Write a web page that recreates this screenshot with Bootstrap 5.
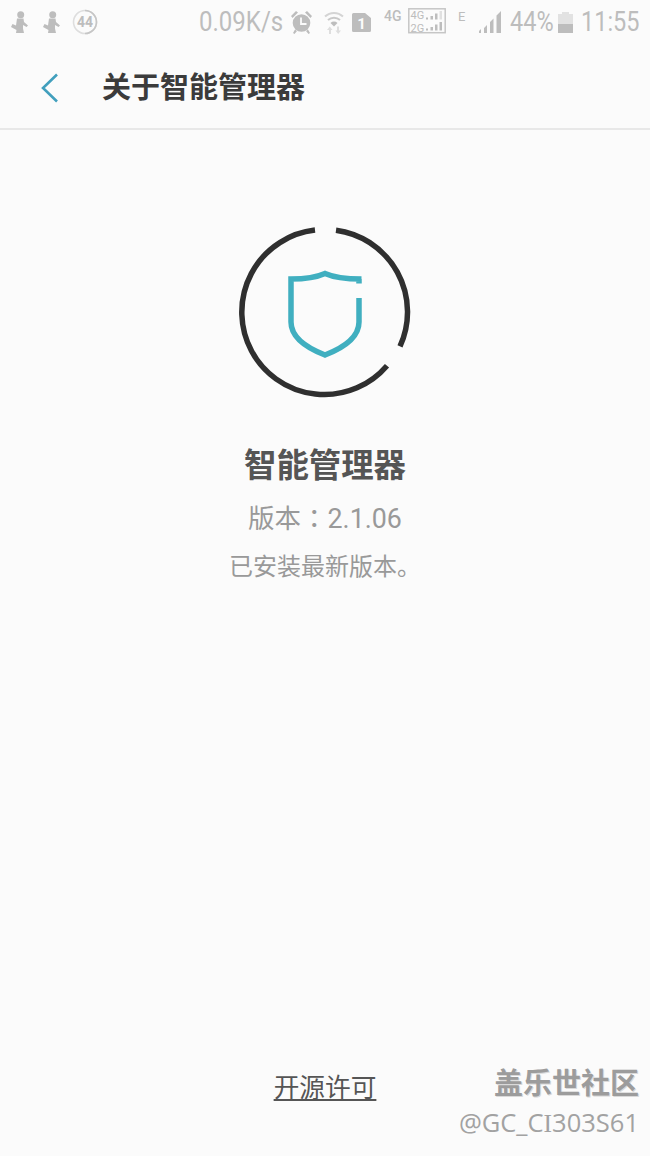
<!doctype html>
<html lang="zh">
<head>
<meta charset="utf-8">
<title>关于智能管理器</title>
<link href="https://cdn.jsdelivr.net/npm/bootstrap@5.3.0/dist/css/bootstrap.min.css" rel="stylesheet">
<style>
  body {
    background-color: #fbfbfb;
    font-family: Roboto, "Noto Sans CJK SC", sans-serif;
    overflow: hidden;
  }
  .screen { height: 1156px; position: relative; }
  .status-bar { height: 44px; color: #bdbdbd; fill: #bdbdbd; padding: 0 11px; }
  .status-bar svg { display: block; flex: none; }
  .status-text { display: block; flex: none; font-size: 27px; line-height: 45px; white-space: nowrap; transform: scaleX(.87); transform-origin: left center; }
  .st-speed { width: 84px; transform: scaleX(.89); }
  .st-batt { width: 43px; margin-left: 9px; }
  .st-time { width: 58px; margin-left: 8px; }
  .gap-5px { margin-left: 5px; }
  .gap-8px { margin-left: 8px; }
  .gap-12px { margin-left: 12px; }
  .gap-13px { margin-left: 13px; }
  .gap-15px { margin-left: 15px; }
  .app-bar { height: 86px; border-bottom: 2px solid #e8e8e8; padding: 3px 0 0 40px; }
  .back-icon { width: 20px; height: 32px; }
  .app-title { font-size: 29px; line-height: 40px; font-weight: 700; color: #3b3b3b; margin: 0 0 0 42px; }
  .logo-box { margin-top: 92px; width: 180px; height: 180px; }
  .app-name { font-size: 32.4px; line-height: 44px; font-weight: 700; color: #555; margin-top: 42px; }
  .app-version { font-size: 26.5px; line-height: 36px; color: #999; margin-top: 11px; }
  .ver-colon { font-family: "Noto Sans CJK TC", sans-serif; }
  .ver-num { font-size: 26.8px; }
  .app-note { font-size: 24px; line-height: 34px; color: #999; margin-top: 13px; }
  .license-link { font-size: 25.7px; line-height: 36px; color: #555; margin-bottom: 50px; }
  .license-link:hover { color: #555; }
  .watermark { position: absolute; right: 11px; bottom: 13px; text-align: right; color: #9c9c9c; }
  .watermark-name { font-size: 29px; line-height: 38px; font-weight: 700; text-shadow: 1px 1px 0 #d9d9d9; }
  .watermark-id { font-size: 25.5px; line-height: 38px; font-family: "Open Sans", sans-serif; color: #a2a2a2; }
  .wm-serif { font-family: "Liberation Serif", serif; }
</style>
</head>
<body>
<div class="screen d-flex flex-column">
  <div class="status-bar d-flex align-items-center">
    <svg width="17" height="22" viewBox="0 0 17 22"><circle cx="9.700" cy="3.800" r="3.500"/><path d="M6 7.500h6.500l.5 3.500 4 3.500-1.500 1.500-3.500-2v3.500l1 4.500H5l.5-3L0 16l1.500-3 3.500 1.500z"/></svg>
    <svg class="gap-15px" width="17" height="22" viewBox="0 0 17 22"><circle cx="9.700" cy="3.800" r="3.500"/><path d="M6 7.500h6.500l.5 3.500 4 3.500-1.500 1.500-3.500-2v3.500l1 4.500H5l.5-3L0 16l1.500-3 3.500 1.500z"/></svg>
    <svg class="gap-12px" width="26" height="26" viewBox="0 0 26 26"><circle cx="13" cy="13" r="11.500" fill="none" stroke="#dedede" stroke-width="1.600"/><path d="M13 1.500a11.500 11.500 0 0 1 0 23" fill="none" stroke="#c6c6c6" stroke-width="1.600"/><text x="13" y="18" text-anchor="middle" font-size="14" font-weight="700" font-family="Roboto">44</text></svg>
    <span class="status-text st-speed ms-auto">0.09K/s</span>
    <svg class="gap-8px" width="21" height="24" viewBox="0 0 21 24"><circle cx="10.500" cy="13" r="8.800"/><path d="M0 6l5-5 2 1.500-5.500 5.500zM21 6l-5-5-2 1.500 5.500 5.500zM4 19.500l-2 3.500 1.500 1 2.500-3zM17 19.500l2 3.500-1.500 1-2.500-3z"/><path d="M10 7.500V14h5.500" fill="none" stroke="#fbfbfb" stroke-width="1.800"/></svg>
    <svg class="gap-12px" width="20" height="24" viewBox="0 0 20 24"><path d="M1 6.500a13 13 0 0 1 18 0" fill="none" stroke="#d4d4d4" stroke-width="2"/><path d="M4 10a9 9 0 0 1 12 0" fill="none" stroke="#c8c8c8" stroke-width="2"/><path d="M6.500 13a5 5 0 0 1 7 0L10 16.500z"/><path d="M5 24v-4H3l2.800-3.500L8.500 20H7v4zM13 16.500v4h-1.500l2.700 3.500 2.800-3.500H15v-4z" fill="#dedede"/></svg>
    <svg class="gap-8px" width="19" height="19" viewBox="0 0 19 19"><path d="M1.500 0h11.500l6 5v12.500a1.500 1.500 0 0 1-1.500 1.500h-16A1.500 1.500 0 0 1 0 17.500v-16A1.500 1.500 0 0 1 1.500 0z"/><text x="9.500" y="16" text-anchor="middle" font-size="15" font-weight="700" fill="#fbfbfb" font-family="Roboto">1</text></svg>
    <svg class="gap-13px" width="19" height="28" viewBox="0 0 19 28"><text x="0" y="13" font-size="14" font-weight="500" font-family="Roboto">4G</text></svg>
    <svg class="gap-5px" width="38" height="28" viewBox="0 0 38 28"><rect x=".8" y=".8" width="36.400" height="23.900" fill="none" stroke="#c6c6c6" stroke-width="1.500"/><text x="2.500" y="10.500" font-size="11" font-family="Roboto">4G</text><text x="2.500" y="23.500" font-size="11" font-family="Roboto">2G</text><path d="M18 9.500h2v2h-2zM22.500 8h2.500v3.500h-2.500zM27 5.500h2.500v6H27z"/><path d="M31.500 3H34v8.500h-2.500z" fill="#e0e0e0"/><path d="M18 20.500h2v2h-2zM22.500 19h2.500v3.500h-2.500zM27 16.500h2.500v6H27zM31.500 14H34v8.500h-2.500z"/></svg>
    <svg class="gap-12px" width="8" height="24" viewBox="0 0 8 24"><text x="0" y="11" font-size="13" font-family="Roboto">E</text></svg>
    <svg class="gap-13px" width="22" height="22" viewBox="0 0 22 22"><path d="M0 22v-2l2-2v4zM5 22v-5l3-3v8zM11 22V11l3.500-3.500V22zM17.500 22V4.500L22 0v22z"/></svg>
    <span class="status-text st-batt">44%</span>
    <svg class="gap-5px" width="15" height="21" viewBox="0 0 15 21"><path d="M4 0h7v2h4v10H0V2h4z" fill="#e2e2e2"/><path d="M0 12h15v9H0z"/></svg>
    <span class="status-text st-time">11:55</span>
  </div>

  <div class="app-bar d-flex align-items-center">
    <svg class="back-icon" viewBox="0 0 20 32"><path d="M17 2.500 3 16l14 13.500" fill="none" stroke="#419fbd" stroke-width="2.600"/></svg>
    <h1 class="app-title">关于智能管理器</h1>
  </div>

  <div class="d-flex flex-column align-items-center flex-grow-1">
    <svg class="logo-box" viewBox="0 0 180 180" fill="none">
      <path d="M101 8.200A82.500 82.500 0 0 1 165 124.400M152 143.700A82.500 82.500 0 1 1 80 8.100" stroke="#2f2f2f" stroke-width="5.500"/>
      <path d="M126.500 57C112 57 100 56 90 51.500 80 56 68 57 56 57V100C56 116 72 126 90 133 108 126 124 116 124 100V76M124 57V61.500" stroke="#40afc0" stroke-width="5.500"/>
    </svg>
    <div class="app-name">智能管理器</div>
    <div class="app-version">版本<span class="ver-colon" lang="zh-Hant-TW">：</span><span class="ver-num">2.1.06</span></div>
    <div class="app-note">已安装最新版本。</div>
    <a class="license-link mt-auto" href="#">开源许可</a>
  </div>

  <div class="watermark">
    <div class="watermark-name">盖乐世社区</div>
    <div class="watermark-id">@GC_C<span class="wm-serif">I</span>303S61</div>
  </div>
</div>
<script src="https://cdn.jsdelivr.net/npm/bootstrap@5.3.0/dist/js/bootstrap.bundle.min.js"></script>
</body>
</html>
